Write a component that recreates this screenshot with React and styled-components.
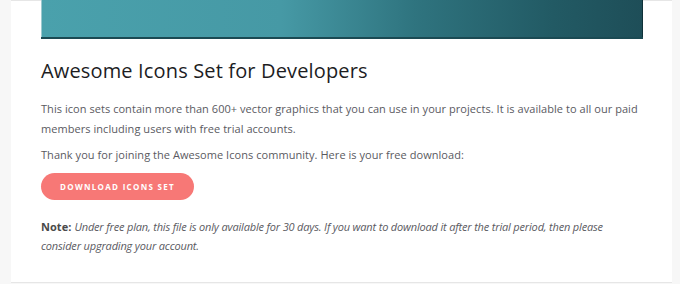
import React from "react";
import styled, { createGlobalStyle } from "styled-components";

const Global = createGlobalStyle`
  html, body {
    margin: 0;
    padding: 0;
    background: #f7f7f7;
    font-family: "Open Sans", "Liberation Sans", sans-serif;
  }
`;

const Page = styled.div`
  width: 680px;
  height: 284px;
  overflow: hidden;
  background: #f7f7f7;
  padding: 0 8px 0 11px;
  box-sizing: border-box;
`;

const Card = styled.div`
  background: #ffffff;
  border-top: 1px solid #e6e6e6;
  border-bottom: 1px solid #e6e6e6;
  height: 283px;
  box-sizing: border-box;
  padding: 0 30px;
`;

const Banner = styled.div`
  height: 37px;
  margin-top: -1px;
  width: 602px;
  background: linear-gradient(90deg, #4aa1ac 0%, #4699a5 40%, #2f747f 62%, #225a64 85%, #1e4e58 100%);
  border-bottom: 2px solid #1b4a53;
  box-shadow: inset 1px 0 0 #9cc9cf, inset -1px 0 0 #0f3138;
`;

const Title = styled.h1`
  margin: 18px 0 0;
  font-family: "Open Sans", "Liberation Sans", sans-serif;
  font-weight: 400;
  font-size: 20px;
  color: #1d1d1f;
  letter-spacing: 0.15px;
  line-height: 28px;
`;

const Text = styled.p`
  margin: ${(p) => p.$top || 0}px 0 0;
  width: 598px;
  font-size: 11px;
  line-height: 20px;
  color: #5a5a5f;
  letter-spacing: 0.05px;
`;

const Button = styled.button`
  margin-top: 8px;
  width: 153px;
  height: 27px;
  border: none;
  border-radius: 14px;
  background: #f77876;
  color: #ffffff;
  font-family: "Open Sans", "Liberation Sans", sans-serif;
  font-weight: 700;
  font-size: 8px;
  letter-spacing: 1.3px;
  text-transform: uppercase;
  cursor: pointer;
`;

const Note = styled(Text)`
  line-height: 19px;
`;

const Label = styled.b`
  font-weight: 700;
  color: #4a4a4a;
`;

const Em = styled.em`
  margin-left: 3px;
  font-style: italic;
  letter-spacing: -0.17px;
`;

export default function App() {
  return (
    <Page>
      <Global />
      <Card>
        <Banner />
        <Title>Awesome Icons Set for Developers</Title>
        <Text $top={14}>
          This icon sets contain more than 600+ vector graphics that you can use in your projects. It is
          available to all our paid members including users with free trial accounts.
        </Text>
        <Text $top={6}>
          Thank you for joining the Awesome Icons community. Here is your free download:
        </Text>
        <Button>Download Icons Set</Button>
        <Note $top={17}>
          <Label>Note:</Label>
          <Em>
            Under free plan, this file is only available for 30 days. If you want to download it after the
            trial period, then please consider upgrading your account.
          </Em>
        </Note>
      </Card>
    </Page>
  );
}
